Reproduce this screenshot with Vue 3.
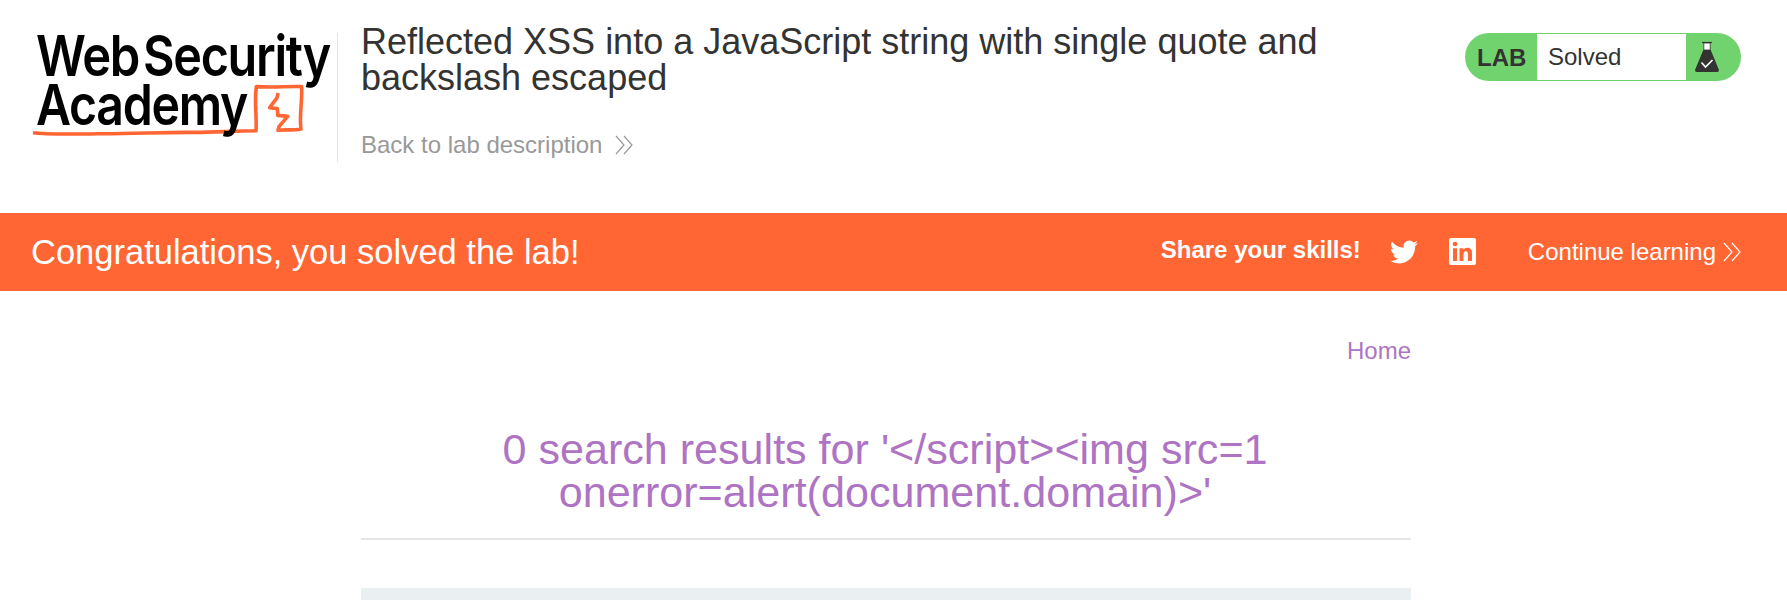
<script setup>
const title = 'Reflected XSS into a JavaScript string with single quote and backslash escaped'
const query = "'</" + "script><img src=1 onerror=alert(document.domain)>'"
</script>

<template>
  <div class="page">
    <header class="header">
      <svg class="logo" viewBox="30 30 305 115" width="305" height="115" role="img">
        <g class="wordmark">
          <text x="36" y="76" textLength="103" lengthAdjust="spacingAndGlyphs">Web</text>
          <text x="143" y="76" textLength="187" lengthAdjust="spacingAndGlyphs">Security</text>
        </g>
        <g class="sketch">
          <path d="M33 132.7 C47 134.6 70 134.2 98 133.7 C130 134 165 132 195 132.4 C215 132.4 235 130.8 256 130.8 C257 115 254 101 256.4 86.6 C272 88 288 86 301.6 86.6 C302.5 102 299 116 301 129 C293 130.6 285 129.4 278 130.2 L279 126.6 L287.6 116.4 L277.8 115.4 L277.4 108.6 L269.6 107.6 L276.8 98.2 L278.2 93" />
        </g>
        <text class="wordmark" x="36" y="125" textLength="211" lengthAdjust="spacingAndGlyphs">Academy</text>
      </svg>
      <div class="intro">
        <h2>{{ title }}</h2>
        <a class="back">
          <span>Back to lab description</span>
          <svg width="18" height="20" viewBox="0 0 18 20"><path class="chev" d="M1 1 L9 10 L1 19 M9 1 L17 10 L9 19" /></svg>
        </a>
      </div>
      <div class="status">
        <strong>LAB</strong>
        <span>Solved</span>
        <svg width="26" height="32" viewBox="0 0 26 32">
          <path d="M8 1.5 H18" stroke="#333332" stroke-width="1.2" />
          <path d="M9.8 2 H16.2 V9 H9.8 Z" fill="#fff" stroke="#333332" stroke-width=".8" />
          <path d="M9.3 9 H16.7 L24.8 28.5 Q25.3 31 23 31 H3 Q.7 31 1.2 28.5 Z" fill="#333332" />
          <path d="M7.5 21.5 L11.5 26 L18.5 19" fill="none" stroke="#fff" stroke-width="1.6" />
        </svg>
      </div>
    </header>

    <section class="banner">
      <h4>Congratulations, you solved the lab!</h4>
      <strong class="share">Share your skills!</strong>
      <svg class="twitter" width="28" height="28" viewBox="0 0 24 24" fill="#fff">
        <path d="M23.953 4.57a10 10 0 01-2.825.775 4.958 4.958 0 002.163-2.723c-.951.555-2.005.959-3.127 1.184a4.92 4.92 0 00-8.384 4.482C7.69 8.095 4.067 6.13 1.64 3.162a4.822 4.822 0 00-.666 2.475c0 1.71.87 3.213 2.188 4.096a4.904 4.904 0 01-2.228-.616v.06a4.923 4.923 0 003.946 4.827 4.996 4.996 0 01-2.212.085 4.936 4.936 0 004.604 3.417 9.867 9.867 0 01-6.102 2.105c-.39 0-.779-.023-1.17-.067a13.995 13.995 0 007.557 2.209c9.053 0 13.998-7.496 13.998-13.985 0-.21 0-.42-.015-.63A9.935 9.935 0 0024 4.59z" />
      </svg>
      <svg class="linkedin" width="27" height="27" viewBox="0 0 24 24" fill="#fff">
        <path d="M20.447 20.452h-3.554v-5.569c0-1.328-.027-3.037-1.852-3.037-1.853 0-2.136 1.445-2.136 2.939v5.667H9.351V9h3.414v1.561h.046c.477-.9 1.637-1.85 3.37-1.85 3.601 0 4.267 2.37 4.267 5.455v6.286zM5.337 7.433a2.062 2.062 0 01-2.063-2.065 2.064 2.064 0 112.063 2.065zm1.782 13.019H3.555V9h3.564v11.452zM22.5 0H1.5a1.5 1.5 0 00-1.5 1.5v21a1.5 1.5 0 001.5 1.5h21a1.5 1.5 0 001.5-1.5V1.5a1.5 1.5 0 00-1.5-1.5z" />
      </svg>
      <a class="continue">
        <span>Continue learning</span>
        <svg width="18" height="20" viewBox="0 0 18 20"><path class="chev" d="M1 1 L9 10 L1 19 M9 1 L17 10 L9 19" /></svg>
      </a>
    </section>

    <main class="main">
      <nav><a>Home</a></nav>
      <h1>0 search results for {{ query }}</h1>
      <div class="search"></div>
    </main>
  </div>
</template>

<style>
html, body { margin: 0; background: #fff; overflow: hidden; }
</style>

<style scoped>
.page {
  height: 600px;
  overflow: hidden;
  font: 24px/24px "Liberation Sans", Arial, sans-serif;
  color: #333332;
}
h1, h2, h4 { margin: 0; font-weight: 400; }
.header {
  box-sizing: border-box;
  height: 213px;
  padding: 0 46px 0 30px;
  display: flex;
  align-items: flex-start;
}
.logo { flex: none; margin-top: 30px; overflow: visible; }
.wordmark { font-family: Inter, sans-serif; font-weight: 600; font-size: 56.5px; letter-spacing: -1.5px; fill: #000; }
.sketch path { fill: none; stroke: #ff6633; stroke-width: 3.6; stroke-linejoin: round; }
.intro {
  box-sizing: border-box;
  height: 129px;
  margin: 33px 0 0 2px;
  padding: 0 0 0 23px;
  border-left: 1px solid #e5e5e5;
  width: 1040px;
}
h2 { font-size: 36px; line-height: 36px; margin-top: -9px; }
.back { display: flex; align-items: center; gap: 13px; margin-top: 37px; color: #999; }
.chev { fill: none; stroke: currentColor; stroke-width: 1.2; }
.status {
  box-sizing: border-box;
  width: 276px;
  height: 48px;
  margin: 33px 0 0 auto;
  display: flex;
  align-items: center;
  border-radius: 24px;
  background: #71d36e;
}
.status strong { width: 60px; padding: 1px 0 0 12px; }
.status span { width: 138px; height: 46px; padding-left: 11px; line-height: 46px; background: #fff; }
.status svg { margin-left: 8px; }
.banner {
  box-sizing: border-box;
  height: 78px;
  padding: 0 46px 0 31px;
  display: flex;
  align-items: center;
  background: #ff6633;
  color: #fff;
}
h4 { font-size: 34.5px; line-height: 36px; }
.share { margin: 0 29px 4px auto; }
.twitter { margin-right: 31px; }
.linkedin { margin: 0 52px 2px 0; }
.continue { display: flex; align-items: center; gap: 7px; }
.main { width: 1050px; margin: 0 auto 0 361px; color: #ae74c3; }
nav { display: flex; justify-content: flex-end; padding-top: 48px; }
h1 {
  margin-top: 65px;
  padding: 0 2px 24px 0;
  border-bottom: 2px solid #e5e5e5;
  font-size: 43.1px;
  line-height: 43.2px;
  text-align: center;
}
.search { height: 40px; margin-top: 48px; background: #eaf0f2; }
</style>
